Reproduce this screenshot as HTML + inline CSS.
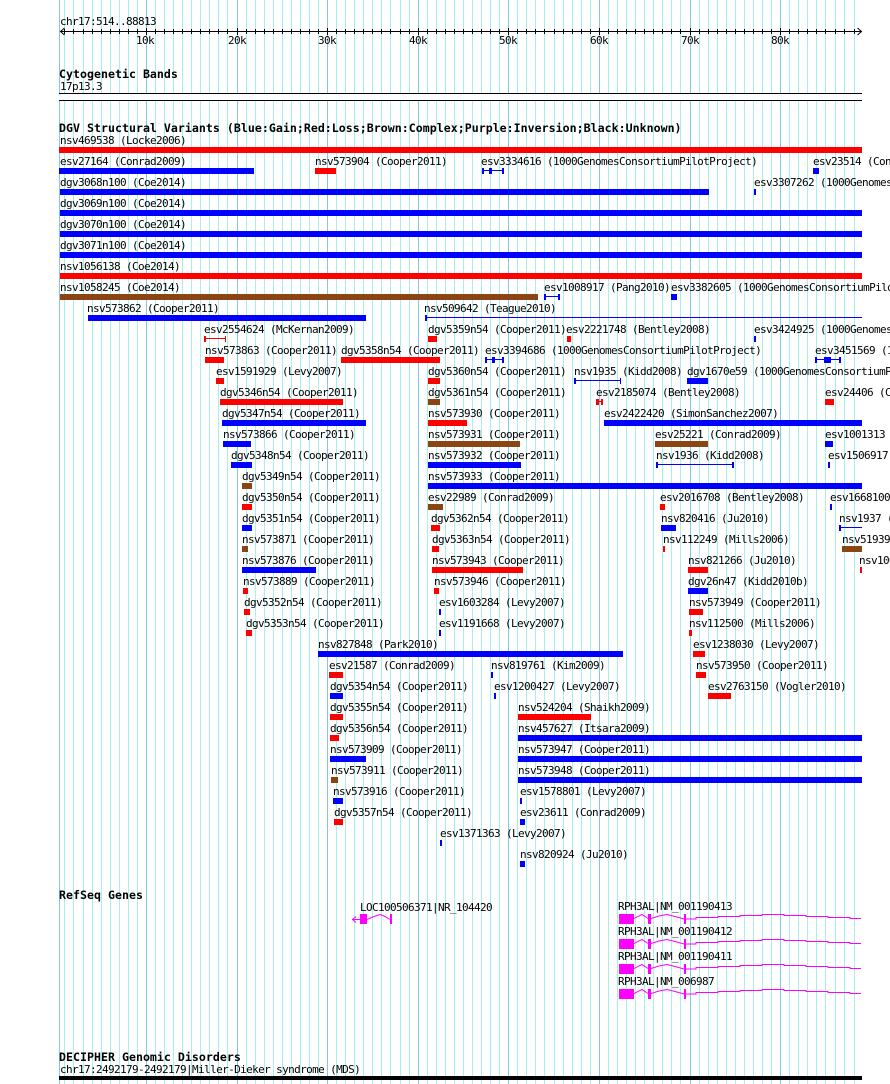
<!DOCTYPE html>
<html><head><meta charset="utf-8"><title>Genome tracks</title>
<style>
html,body{margin:0;padding:0;background:#fff}
svg{display:block}
text{font-family:"DejaVu Sans Mono",monospace;font-size:11px;letter-spacing:-.62px;fill:#000}
text.h{font-size:11.6px;font-weight:bold;letter-spacing:.015px}
.b{fill:#00f}.r{fill:#f00}.n{fill:#8b4513}.m{fill:#f0f}
</style></head><body>
<svg xmlns="http://www.w3.org/2000/svg" width="890" height="1084" viewBox="0 0 890 1084" shape-rendering="crispEdges">
<g transform="translate(.5,0)" fill="none">
<path stroke="#a8f0f0" d="M64 0V1084M73 0V1084M83 0V1084M92 0V1084M101 0V1084M110 0V1084M119 0V1084M128 0V1084M137 0V1084M155 0V1084M164 0V1084M173 0V1084M182 0V1084M191 0V1084M200 0V1084M209 0V1084M218 0V1084M227 0V1084M246 0V1084M255 0V1084M264 0V1084M273 0V1084M282 0V1084M291 0V1084M300 0V1084M309 0V1084M318 0V1084M336 0V1084M345 0V1084M354 0V1084M363 0V1084M372 0V1084M381 0V1084M390 0V1084M400 0V1084M409 0V1084M427 0V1084M436 0V1084M445 0V1084M454 0V1084M463 0V1084M472 0V1084M481 0V1084M490 0V1084M499 0V1084M517 0V1084M526 0V1084M535 0V1084M544 0V1084M554 0V1084M563 0V1084M572 0V1084M581 0V1084M590 0V1084M608 0V1084M617 0V1084M626 0V1084M635 0V1084M644 0V1084M653 0V1084M662 0V1084M671 0V1084M680 0V1084M699 0V1084M708 0V1084M717 0V1084M726 0V1084M735 0V1084M744 0V1084M753 0V1084M762 0V1084M771 0V1084M789 0V1084M798 0V1084M807 0V1084M816 0V1084M825 0V1084M835 0V1084M844 0V1084M854 0V1084"/>
<path stroke="#80c8f0" d="M59 0V1084M146 0V1084M237 0V1084M327 0V1084M418 0V1084M508 0V1084M599 0V1084M690 0V1084M780 0V1084"/>
</g>
<g transform="translate(0,.5)" fill="none" stroke="#000">
<path d="M60 31H861"/>
</g>
<g transform="translate(.5,0)" fill="none" stroke="#000">
<path d="M64 29V34M73 29V34M83 29V34M92 29V34M101 29V34M110 29V34M119 29V34M128 29V34M137 29V34M155 29V34M164 29V34M173 29V34M182 29V34M191 29V34M200 29V34M209 29V34M218 29V34M227 29V34M246 29V34M255 29V34M264 29V34M273 29V34M282 29V34M291 29V34M300 29V34M309 29V34M318 29V34M336 29V34M345 29V34M354 29V34M363 29V34M372 29V34M381 29V34M390 29V34M400 29V34M409 29V34M427 29V34M436 29V34M445 29V34M454 29V34M463 29V34M472 29V34M481 29V34M490 29V34M499 29V34M517 29V34M526 29V34M535 29V34M544 29V34M554 29V34M563 29V34M572 29V34M581 29V34M590 29V34M608 29V34M617 29V34M626 29V34M635 29V34M644 29V34M653 29V34M662 29V34M671 29V34M680 29V34M699 29V34M708 29V34M717 29V34M726 29V34M735 29V34M744 29V34M753 29V34M762 29V34M771 29V34M789 29V34M798 29V34M807 29V34M816 29V34M825 29V34M835 29V34M844 29V34M854 29V34"/>
<path d="M146 28V35M237 28V35M327 28V35M418 28V35M508 28V35M599 28V35M690 28V35M780 28V35"/>
<path d="M64 28L60 31.5L64 35M857 28L861 31.5L857 35" shape-rendering="auto"/>
</g>
<text x="60" y="25">chr17:514..88813</text>
<text x="136" y="44">10k</text><text x="228" y="44">20k</text><text x="318" y="44">30k</text><text x="409" y="44">40k</text><text x="499" y="44">50k</text><text x="590" y="44">60k</text><text x="681" y="44">70k</text><text x="771" y="44">80k</text>

<text class="h" x="59" y="78">Cytogenetic Bands</text>
<text x="60" y="90">17p13.3</text>
<rect x="59" y="93" width="803" height="8" fill="#fff"/>
<rect x="59" y="93" width="803" height="1" fill="#000"/>
<rect x="59" y="100" width="803" height="1" fill="#000"/>

<text class="h" x="59" y="132">DGV Structural Variants (Blue:Gain;Red:Loss;Brown:Complex;Purple:Inversion;Black:Unknown)</text>

<text x="60" y="144">nsv469538 (Locke2006)</text><rect class="r" x="59" y="147" width="803" height="6"/>

<text x="60" y="165">esv27164 (Conrad2009)</text><rect class="b" x="59" y="168" width="195" height="6"/>
<text x="315" y="165">nsv573904 (Cooper2011)</text><rect class="r" x="315" y="168" width="21" height="6"/>
<text x="481" y="165">esv3334616 (1000GenomesConsortiumPilotProject)</text><rect class="b" x="482" y="170" width="22" height="1"/><rect class="b" x="482" y="168" width="2" height="6"/><rect class="b" x="489" y="168" width="3" height="6"/><rect class="b" x="502" y="168" width="2" height="6"/>
<text x="813" y="165">esv23514 (Conrad2009)</text><rect class="b" x="813" y="168" width="6" height="6"/>

<text x="60" y="186">dgv3068n100 (Coe2014)</text><rect class="b" x="60" y="189" width="649" height="6"/>
<text x="754" y="186">esv3307262 (1000GenomesConsortiumPilotProject)</text><rect class="b" x="754" y="189" width="2" height="6"/>

<text x="60" y="207">dgv3069n100 (Coe2014)</text><rect class="b" x="60" y="210" width="802" height="6"/>
<text x="60" y="228">dgv3070n100 (Coe2014)</text><rect class="b" x="60" y="231" width="802" height="6"/>
<text x="60" y="249">dgv3071n100 (Coe2014)</text><rect class="b" x="60" y="252" width="802" height="6"/>
<text x="60" y="270">nsv1056138 (Coe2014)</text><rect class="r" x="60" y="273" width="802" height="6"/>

<text x="60" y="291">nsv1058245 (Coe2014)</text><rect class="n" x="60" y="294" width="478" height="6"/>
<text x="544" y="291">esv1008917 (Pang2010)</text><rect class="b" x="544" y="296" width="16" height="1"/><rect class="b" x="544" y="294" width="2" height="6"/><rect class="b" x="558" y="294" width="2" height="6"/>
<text x="671" y="291">esv3382605 (1000GenomesConsortiumPilotProject)</text><rect class="b" x="671" y="294" width="6" height="6"/>

<text x="87" y="312">nsv573862 (Cooper2011)</text><rect class="b" x="88" y="315" width="278" height="6"/>
<text x="424" y="312">nsv509642 (Teague2010)</text><rect class="b" x="425" y="317" width="437" height="1"/><rect class="b" x="425" y="315" width="2" height="6"/>

<text x="204" y="333">esv2554624 (McKernan2009)</text><rect class="r" x="204" y="338" width="22" height="1"/><rect class="r" x="204" y="336" width="2" height="6"/><rect class="r" x="225" y="336" width="1" height="6"/>
<text x="428" y="333">dgv5359n54 (Cooper2011)</text><rect class="r" x="428" y="336" width="9" height="6"/>
<text x="566" y="333">esv2221748 (Bentley2008)</text><rect class="r" x="567" y="336" width="4" height="6"/>
<text x="754" y="333">esv3424925 (1000GenomesConsortiumPilotProject)</text><rect class="b" x="754" y="336" width="2" height="6"/>

<text x="205" y="354">nsv573863 (Cooper2011)</text><rect class="r" x="205" y="357" width="19" height="6"/>
<text x="341" y="354">dgv5358n54 (Cooper2011)</text><rect class="r" x="341" y="357" width="99" height="6"/>
<text x="485" y="354">esv3394686 (1000GenomesConsortiumPilotProject)</text><rect class="b" x="485" y="359" width="19" height="1"/><rect class="b" x="485" y="357" width="2" height="6"/><rect class="b" x="492" y="357" width="3" height="6"/><rect class="b" x="502" y="357" width="2" height="6"/>
<text x="815" y="354">esv3451569 (1000Genomes)</text><rect class="b" x="815" y="359" width="26" height="1"/><rect class="b" x="815" y="357" width="2" height="6"/><rect class="b" x="824" y="357" width="7" height="6"/><rect class="b" x="839" y="357" width="2" height="6"/>

<text x="216" y="375">esv1591929 (Levy2007)</text><rect class="r" x="216" y="378" width="8" height="6"/>
<text x="428" y="375">dgv5360n54 (Cooper2011)</text><rect class="r" x="428" y="378" width="12" height="6"/>
<text x="574" y="375">nsv1935 (Kidd2008)</text><rect class="b" x="574" y="380" width="47" height="1"/><rect class="b" x="574" y="378" width="2" height="6"/><rect class="b" x="620" y="378" width="1" height="6"/>
<text x="687" y="375">dgv1670e59 (1000GenomesConsortiumPilotProject)</text><rect class="b" x="687" y="378" width="21" height="6"/>

<text x="220" y="396">dgv5346n54 (Cooper2011)</text><rect class="r" x="220" y="399" width="123" height="6"/>
<text x="428" y="396">dgv5361n54 (Cooper2011)</text><rect class="n" x="428" y="399" width="12" height="6"/>
<text x="596" y="396">esv2185074 (Bentley2008)</text><rect class="r" x="596" y="399" width="3" height="6"/><rect class="r" x="599" y="401" width="2" height="1"/><rect class="r" x="601" y="399" width="2" height="6"/>
<text x="825" y="396">esv24406 (Conrad2009)</text><rect class="r" x="825" y="399" width="9" height="6"/>

<text x="222" y="417">dgv5347n54 (Cooper2011)</text><rect class="b" x="222" y="420" width="144" height="6"/>
<text x="428" y="417">nsv573930 (Cooper2011)</text><rect class="r" x="428" y="420" width="39" height="6"/>
<text x="604" y="417">esv2422420 (SimonSanchez2007)</text><rect class="b" x="604" y="420" width="258" height="6"/>

<text x="223" y="438">nsv573866 (Cooper2011)</text><rect class="b" x="223" y="441" width="28" height="6"/>
<text x="428" y="438">nsv573931 (Cooper2011)</text><rect class="n" x="428" y="441" width="92" height="6"/>
<text x="655" y="438">esv25221 (Conrad2009)</text><rect class="n" x="655" y="441" width="53" height="6"/>
<text x="825" y="438">esv1001313 (Pang2010)</text><rect class="b" x="825" y="441" width="8" height="6"/>

<text x="231" y="459">dgv5348n54 (Cooper2011)</text><rect class="b" x="231" y="462" width="21" height="6"/>
<text x="428" y="459">nsv573932 (Cooper2011)</text><rect class="b" x="428" y="462" width="93" height="6"/>
<text x="656" y="459">nsv1936 (Kidd2008)</text><rect class="b" x="656" y="464" width="78" height="1"/><rect class="b" x="656" y="462" width="2" height="6"/><rect class="b" x="732" y="462" width="2" height="6"/>
<text x="828" y="459">esv1506917 (Levy2007)</text><rect class="b" x="828" y="462" width="2" height="6"/>

<text x="242" y="480">dgv5349n54 (Cooper2011)</text><rect class="n" x="242" y="483" width="10" height="6"/>
<text x="428" y="480">nsv573933 (Cooper2011)</text><rect class="b" x="428" y="483" width="434" height="6"/>

<text x="242" y="501">dgv5350n54 (Cooper2011)</text><rect class="r" x="242" y="504" width="10" height="6"/>
<text x="428" y="501">esv22989 (Conrad2009)</text><rect class="n" x="428" y="504" width="15" height="6"/>
<text x="660" y="501">esv2016708 (Bentley2008)</text><rect class="r" x="660" y="504" width="5" height="6"/>
<text x="830" y="501">esv1668100 (Levy2007)</text><rect class="b" x="830" y="504" width="2" height="6"/>

<text x="242" y="522">dgv5351n54 (Cooper2011)</text><rect class="b" x="242" y="525" width="10" height="6"/>
<text x="431" y="522">dgv5362n54 (Cooper2011)</text><rect class="r" x="431" y="525" width="9" height="6"/>
<text x="661" y="522">nsv820416 (Ju2010)</text><rect class="b" x="661" y="525" width="15" height="6"/>
<text x="839" y="522">nsv1937 (Kidd2008)</text><rect class="b" x="839" y="527" width="23" height="1"/><rect class="b" x="839" y="525" width="2" height="6"/>

<text x="242" y="543">nsv573871 (Cooper2011)</text><rect class="n" x="242" y="546" width="6" height="6"/>
<text x="432" y="543">dgv5363n54 (Cooper2011)</text><rect class="r" x="432" y="546" width="7" height="6"/>
<text x="663" y="543">nsv112249 (Mills2006)</text><rect class="r" x="663" y="546" width="2" height="6"/>
<text x="842" y="543">nsv51939 (Ju2010)</text><rect class="n" x="842" y="546" width="20" height="6"/>

<text x="242" y="564">nsv573876 (Cooper2011)</text><rect class="b" x="242" y="567" width="74" height="6"/>
<text x="432" y="564">nsv573943 (Cooper2011)</text><rect class="r" x="432" y="567" width="91" height="6"/>
<text x="688" y="564">nsv821266 (Ju2010)</text><rect class="r" x="688" y="567" width="20" height="6"/>
<text x="859" y="564">nsv1000 (Ju2010)</text><rect class="r" x="860" y="567" width="2" height="6"/>

<text x="243" y="585">nsv573889 (Cooper2011)</text><rect class="r" x="243" y="588" width="5" height="6"/>
<text x="434" y="585">nsv573946 (Cooper2011)</text><rect class="r" x="434" y="588" width="5" height="6"/>
<text x="688" y="585">dgv26n47 (Kidd2010b)</text><rect class="b" x="688" y="588" width="20" height="6"/>

<text x="244" y="606">dgv5352n54 (Cooper2011)</text><rect class="r" x="244" y="609" width="6" height="6"/>
<text x="439" y="606">esv1603284 (Levy2007)</text><rect class="b" x="439" y="609" width="2" height="6"/>
<text x="689" y="606">nsv573949 (Cooper2011)</text><rect class="r" x="689" y="609" width="14" height="6"/>

<text x="246" y="627">dgv5353n54 (Cooper2011)</text><rect class="r" x="246" y="630" width="6" height="6"/>
<text x="439" y="627">esv1191668 (Levy2007)</text><rect class="b" x="439" y="630" width="2" height="6"/>
<text x="689" y="627">nsv112500 (Mills2006)</text><rect class="r" x="689" y="630" width="3" height="6"/>

<text x="318" y="648">nsv827848 (Park2010)</text><rect class="b" x="318" y="651" width="305" height="6"/>
<text x="693" y="648">esv1238030 (Levy2007)</text><rect class="r" x="693" y="651" width="12" height="6"/>

<text x="329" y="669">esv21587 (Conrad2009)</text><rect class="r" x="329" y="672" width="14" height="6"/>
<text x="491" y="669">nsv819761 (Kim2009)</text><rect class="b" x="491" y="672" width="2" height="6"/>
<text x="696" y="669">nsv573950 (Cooper2011)</text><rect class="r" x="696" y="672" width="10" height="6"/>

<text x="330" y="690">dgv5354n54 (Cooper2011)</text><rect class="b" x="330" y="693" width="13" height="6"/>
<text x="494" y="690">esv1200427 (Levy2007)</text><rect class="b" x="494" y="693" width="2" height="6"/>
<text x="708" y="690">esv2763150 (Vogler2010)</text><rect class="r" x="708" y="693" width="23" height="6"/>

<text x="330" y="711">dgv5355n54 (Cooper2011)</text><rect class="r" x="330" y="714" width="13" height="6"/>
<text x="518" y="711">nsv524204 (Shaikh2009)</text><rect class="r" x="518" y="714" width="73" height="6"/>

<text x="330" y="732">dgv5356n54 (Cooper2011)</text><rect class="r" x="330" y="735" width="9" height="6"/>
<text x="518" y="732">nsv457627 (Itsara2009)</text><rect class="b" x="518" y="735" width="344" height="6"/>

<text x="330" y="753">nsv573909 (Cooper2011)</text><rect class="b" x="330" y="756" width="36" height="6"/>
<text x="518" y="753">nsv573947 (Cooper2011)</text><rect class="b" x="518" y="756" width="344" height="6"/>

<text x="331" y="774">nsv573911 (Cooper2011)</text><rect class="n" x="331" y="777" width="7" height="6"/>
<text x="518" y="774">nsv573948 (Cooper2011)</text><rect class="b" x="518" y="777" width="344" height="6"/>

<text x="333" y="795">nsv573916 (Cooper2011)</text><rect class="b" x="333" y="798" width="10" height="6"/>
<text x="520" y="795">esv1578801 (Levy2007)</text><rect class="b" x="520" y="798" width="2" height="6"/>

<text x="334" y="816">dgv5357n54 (Cooper2011)</text><rect class="r" x="334" y="819" width="9" height="6"/>
<text x="520" y="816">esv23611 (Conrad2009)</text><rect class="b" x="520" y="819" width="5" height="6"/>

<text x="440" y="837">esv1371363 (Levy2007)</text><rect class="b" x="440" y="840" width="2" height="6"/>

<text x="520" y="858">nsv820924 (Ju2010)</text><rect class="b" x="520" y="861" width="5" height="6"/>

<text class="h" x="59" y="899">RefSeq Genes</text>

<text x="360" y="911">LOC100506371|NR_104420</text>
<g fill="none" stroke="#f0f" shape-rendering="auto">
<path d="M352 919.5H360M356 916.5L352.5 919.5L356 922.5"/>
<path d="M367 919.5L374 916.5L380 914.5L385 916.5L390 919.5"/>
</g>
<rect class="m" x="360" y="914" width="7" height="10"/>
<rect class="m" x="390" y="914" width="2" height="10"/>

<text x="618" y="910">RPH3AL|NM_001190413</text>
<text x="618" y="935">RPH3AL|NM_001190412</text>
<text x="618" y="960">RPH3AL|NM_001190411</text>
<text x="618" y="985">RPH3AL|NM_006987</text>
<g fill="none" stroke="#f0f" shape-rendering="auto">
<path d="M634 918.5L642 914.5L648 918.5M651 918.5L659 916L667 914.5L675 916.5L684 919M686 919H696V917.5H718V916.5H740V915.5H762V914.5H784V915.5H806V916.5H828V917.5H850V918.5H861"/>
<path d="M634 943.5L642 939.5L648 943.5M651 943.5L659 941L667 939.5L675 941.5L684 944M686 944H696V942.5H718V941.5H740V940.5H762V939.5H784V940.5H806V941.5H828V942.5H850V943.5H861"/>
<path d="M634 968.5L642 964.5L648 968.5M651 968.5L659 966L667 964.5L675 966.5L684 969M686 969H696V967.5H718V966.5H740V965.5H762V964.5H784V965.5H806V966.5H828V967.5H850V968.5H861"/>
<path d="M634 993.5L642 989.5L648 993.5M651 993.5L659 991L667 989.5L675 991.5L684 994M686 994H696V992.5H718V991.5H740V990.5H762V989.5H784V990.5H806V991.5H828V992.5H850V993.5H861"/>
</g>
<rect class="m" x="619" y="914" width="15" height="10"/><rect class="m" x="648" y="914" width="3" height="10"/><rect class="m" x="684" y="914" width="2" height="10"/>
<rect class="m" x="619" y="939" width="15" height="10"/><rect class="m" x="648" y="939" width="3" height="10"/><rect class="m" x="684" y="939" width="2" height="10"/>
<rect class="m" x="619" y="964" width="15" height="10"/><rect class="m" x="648" y="964" width="3" height="10"/><rect class="m" x="684" y="964" width="2" height="10"/>
<rect class="m" x="619" y="989" width="15" height="10"/><rect class="m" x="648" y="989" width="3" height="10"/><rect class="m" x="684" y="989" width="2" height="10"/>

<text class="h" x="59" y="1061">DECIPHER Genomic Disorders</text>
<text x="60" y="1073">chr17:2492179-2492179|Miller-Dieker syndrome (MDS)</text>
<rect x="59" y="1076" width="803" height="4" fill="#000"/>
</svg>
</body></html>
